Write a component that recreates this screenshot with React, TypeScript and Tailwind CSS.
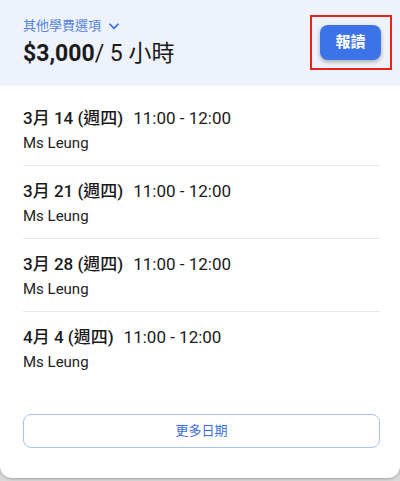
import React from "react";

const sessions = [
    { date: "3月 14 (週四)", time: "11:00 - 12:00", tutor: "Ms Leung" },
    { date: "3月 21 (週四)", time: "11:00 - 12:00", tutor: "Ms Leung" },
    { date: "3月 28 (週四)", time: "11:00 - 12:00", tutor: "Ms Leung" },
    { date: "4月 4 (週四)", time: "11:00 - 12:00", tutor: "Ms Leung" },
];

export default function App() {
    return (
        <div
            className="h-[481px] w-[400px] bg-[#d9d9d9]"
            style={{ fontFamily: 'Roboto, "Noto Sans CJK TC", sans-serif' }}
        >
            <div className="h-[478px] overflow-hidden rounded-b-[12px] bg-white shadow-[0_1px_3px_rgba(0,0,0,0.25)]">
                {/* Header */}
                <div className="flex h-[86px] items-start justify-between bg-[#edf2fb] pl-[23px] pr-[8px]">
                    <div className="pt-[16px]">
                        <div className="flex items-center gap-[6px] text-[13px] leading-[20px] text-[#5583de]">
                            <span>其他學費選項</span>
                            <svg width="14" height="14" viewBox="0 0 24 24" fill="none" stroke="#3a6fe0" strokeWidth="3" strokeLinecap="round" strokeLinejoin="round">
                                <path d="M5 9l7 7 7-7" />
                            </svg>
                        </div>
                        <div className="mt-[3px] text-[23px] leading-[30px] text-[#1a1a1a]">
                            <span className="font-bold">$3,000</span>
                            <span>/ 5 小時</span>
                        </div>
                    </div>
                    <div className="mt-[15px] border-2 border-[#e8231a] py-[8px] pl-[8px] pr-[9px]">
                        <button className="h-[35px] w-[61px] rounded-[8px] bg-[#3c73e6] text-[15px] font-bold text-white shadow-[0_2px_4px_rgba(0,0,0,0.3)]">
                            報讀
                        </button>
                    </div>
                </div>

                {/* Sessions */}
                <div className="pl-[23px] pr-[20px] pt-[7px]">
                    {sessions.map((s, i) => (
                        <div
                            key={i}
                            className="border-b border-[#e6e6e6] pt-[13px] pb-[12px] last:border-0"
                        >
                            <div className="flex items-center gap-[10px] text-[17px] leading-[24px] text-[#1a1a1a]">
                                <span className="font-medium">{s.date}</span>
                                <span>{s.time}</span>
                            </div>
                            <div className="mt-[3px] text-[15px] leading-[20px] text-[#222]">{s.tutor}</div>
                        </div>
                    ))}
                </div>

                <div className="pl-[23px] pr-[20px] pt-[30px]">
                    <button className="h-[34px] w-full rounded-[8px] border border-[#a9c3f6] text-[13px] text-[#3a6fe0]">
                        更多日期
                    </button>
                </div>
            </div>
        </div>
    );
}
